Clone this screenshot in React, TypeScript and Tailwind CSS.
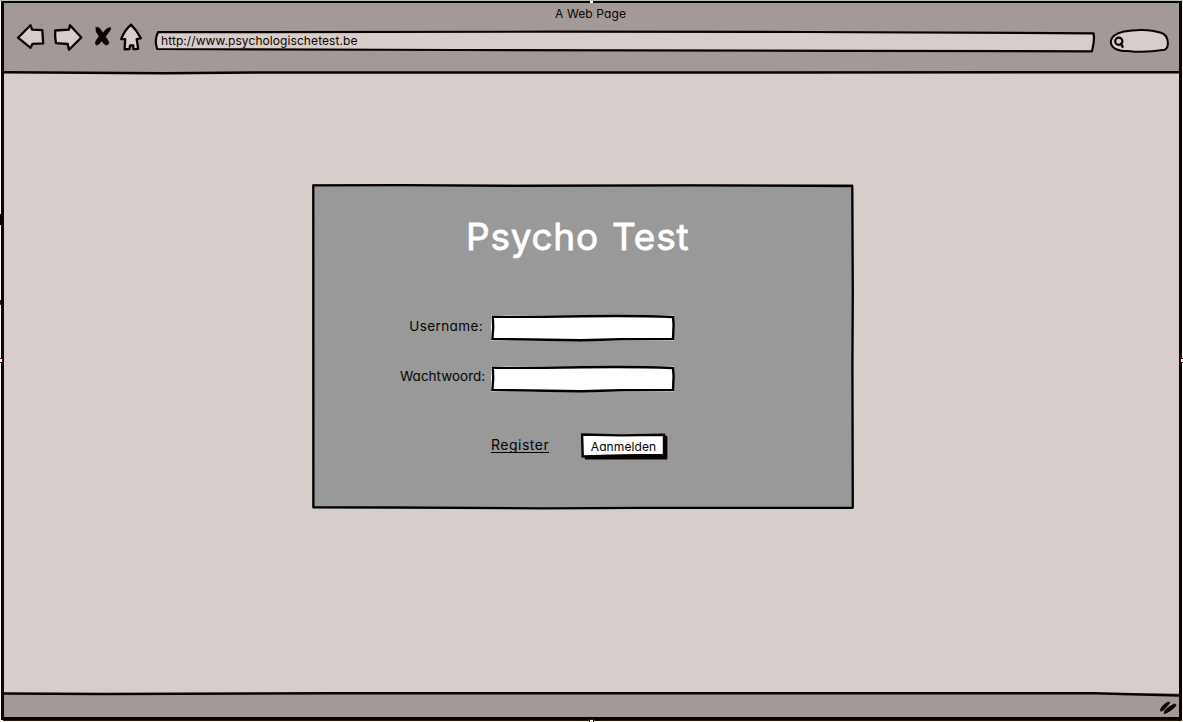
import React from "react";

const FONT = "font-['Inter','Liberation_Sans',sans-serif] [font-feature-settings:'cv11'] whitespace-nowrap leading-none";

function Sketch({ w, h, children }: { w: number; h: number; children: React.ReactNode }) {
  return (
    <svg
      aria-hidden="true"
      width={w}
      height={h}
      viewBox={`0 0 ${w} ${h}`}
      fill="none"
      stroke="#0b0202"
      strokeWidth="2.4"
      strokeLinejoin="round"
      strokeLinecap="round"
      className="pointer-events-none absolute left-0 top-0 overflow-visible"
    >
      {children}
    </svg>
  );
}

function Toolbar() {
  return (
    <svg
      aria-label="Navigation"
      width="144"
      height="34"
      viewBox="0 0 144 34"
      fill="#d7cdcb"
      stroke="#0b0202"
      strokeWidth="2.3"
      strokeLinejoin="round"
      strokeLinecap="round"
      className="mt-[18px] shrink-0"
    >
      <path d="M14 16.7 26.5 4.2 28 8.7 38.3 9.2 39.2 22.4 28.5 22.8 26.6 26.8Z" />
      <path d="M51.2 9.5 65 8.6 66 4.2 77.3 16.5 65 28.7 63.7 23 52 22.2 51.2 16Z" />
      <path
        d="M92 6.5Q95 5 97.5 10L98.8 12Q103 6.5 106.4 6.6 107.5 8 104.5 11.5L101.5 15.5Q103.5 19 105 21.2 104.5 24.5 102 24 100 23.5 97.6 19.8 95.5 23.8 92.5 24.2 90.2 22.5 92.2 19.5L95 15.3Q91 10.5 92 6.5Z"
        fill="#0b0202"
        strokeWidth="0.6"
      />
      <path d="M127 3.6Q133 9.5 136.8 17.2L132.7 18.2 134.2 27.8 129.4 28.2 129.2 24.3 126.2 24.3 125.4 28 120.6 28.3 121.2 18.2 117.2 18Q120.7 9 127 3.6Z" />
    </svg>
  );
}

function Field({ label, labelClass }: { label: string; labelClass: string }) {
  return (
    <label className="flex items-start gap-[7px]">
      <span className={`${FONT} w-[85px] shrink-0 text-right text-[13.5px] text-[#050505] ${labelClass}`}>{label}</span>
      <span className="relative h-[26px] w-[183px] shrink-0 bg-white">
        <input aria-label={label} className="block h-full w-full bg-transparent px-2 text-sm outline-none" />
        <Sketch w={183} h={26}>
          <path
            d="M1.8 1.8Q40 2 92 1.2T182 2L182.6 10 182 24 130 24.3 90 25.2 40 24.5 1.4 24 2.2 12Z"
            stroke="#000"
            strokeWidth="2.4"
            strokeLinejoin="miter"
          />
        </Sketch>
      </span>
    </label>
  );
}

export default function App() {
  return (
    <div className="relative h-[722px] w-[1183px] overflow-hidden border-t border-[#b9c0b8] bg-white pl-px">
      <div className="flex h-[719px] w-[1181px] flex-col border-x-[3px] border-b-[3px] border-t-2 border-[#0b0202] bg-[#d7cdcb]">
        <header className="relative flex h-[70px] shrink-0 items-start bg-[#a39997]">
          <Toolbar />
          <div className="relative ml-[7px] mt-7 h-[21px] w-[940px] shrink-0">
            <Sketch w={940} h={21}>
              <path
                d="M3 1.2 400 .7 650 1 938.5 2.3Q940 8 936.9 20.3L700 19.8 300 19 2.2 18Q-1 9 3 1.2Z"
                fill="#d7cdcb"
                strokeWidth="2.2"
              />
            </Sketch>
            <span className={`${FONT} relative block pl-[6px] pt-[4px] text-[12px] tracking-[0.08px] text-[#0b0202]`}>
              http://www.psychologischetest.be
            </span>
          </div>
          <div className="relative ml-[15px] mt-[27px] h-[22px] w-[58px] shrink-0">
            <Sketch w={58} h={22}>
              <path
                d="M.8 11.5Q2 4 14 1.5 23-.3 32-.1 43 .2 51 2.7C55.5 4 57.6 8 57.9 13Q58 18.6 54.5 19.7 34 23.2 18 21 9 21 4.5 18.3 .8 15.5 .8 11.5Z"
                fill="#d7cdcb"
                strokeWidth="2"
              />
              <circle cx="8.8" cy="11.3" r="3.6" strokeWidth="2.2" />
              <path d="M11 13.7 12.6 16.7" strokeWidth="2.4" />
            </Sketch>
          </div>
          <div className={`${FONT} absolute left-[551px] top-[5px] text-[12px] tracking-[0.12px] text-[#0b0202]`}>A Web Page</div>
          <Sketch w={1175} h={70}>
            <path d="M0 69.2 160 70.3 260 69.5 1175 69.3" strokeWidth="2.5" />
          </Sketch>
        </header>

        <main className="flex flex-1 items-start pl-[308px] pt-[111px]">
          <section className="relative h-[324px] w-[541px] bg-[#999]">
            <Sketch w={541} h={324}>
              <path
                d="M1.3 1.3 90 1.1 200 1.8 380 1.4 540.3 2 540.8 110 540.4 180 540.8 323.8 330 323.8 230 324.3 80 323.5 1.4 323.4Z"
                stroke="#000"
                strokeWidth="2.3"
              />
            </Sketch>
            <h1
              className={`${FONT} ml-[154px] h-[71px] pt-[34px] text-[37px] font-normal tracking-[0.75px] text-white [-webkit-text-stroke:0.8px_white] [word-spacing:2px]`}
            >
              Psycho Test
            </h1>
            <form className="ml-[87px] mt-[60px]">
              <Field label="Username:" labelClass="pt-[5px] pr-px tracking-[0.4px]" />
              <div className="h-[25px]" />
              <Field label="Wachtwoord:" labelClass="pt-1 [text-indent:1px]" />
              <div className="mt-[41px] flex items-start pl-[92px]">
                <a
                  href="#register"
                  className={`${FONT} mt-[5px] h-[15px] w-[58px] border-b border-black text-[14px] tracking-[0.5px] text-[#050505]`}
                >
                  Register
                </a>
                <button type="button" className={`${FONT} relative ml-[32px] h-[26px] w-[86px] text-[12px] text-black`}>
                  <Sketch w={86} h={26}>
                    <path d="M5 4H85.2V25.4H5Z" fill="#000" />
                    <path d="M1.1 1.5 40 2.4 83 1.8V22L40 22.4 1.7 23.4Z" fill="#fff" strokeLinejoin="miter" />
                  </Sketch>
                  <span className="relative block pr-px pt-px tracking-[0.1px]">Aanmelden</span>
                </button>
              </div>
            </form>
          </section>
        </main>

        <footer className="relative h-[24px] shrink-0 bg-[#a39997]">
          <Sketch w={1175} h={24}>
            <path d="M0 .5 100 .9 330 .2 1090 .2 1175 2.5" strokeWidth="2.5" />
            <path
              d="M1156.5 17.8Q1155.8 13.5 1164 9L1166 9.6Q1163 14 1159 17.4ZM1160 20.5Q1159.5 17.5 1164.5 14.2L1170.5 10.8 1172.3 12.2Q1169.5 16.3 1162.5 20Z"
              fill="#0b0202"
              strokeWidth="0.7"
            />
          </Sketch>
        </footer>
      </div>
      <div className="ml-[2px] h-px w-[1179px] bg-[#3a1208]" />

      <div className="absolute left-0 top-[213px] h-[11px] w-px bg-black" />
      <div className="absolute left-0 top-[299px] h-[5px] w-px bg-[#222]" />
      <div className="absolute left-0 top-[357px] h-[5px] w-[3px] border-y border-r border-[#3a1208] bg-white" />
      <div className="absolute right-0 top-[357px] h-[5px] w-[3px] border-y border-l border-[#3a1208] bg-white" />
      <div className="absolute left-[590px] -top-px h-[3px] w-[3px] bg-white" />
      <div className="absolute left-[589px] top-[718px] h-[3px] w-[5px] border-x border-t border-[#3a1208] bg-white" />
    </div>
  );
}
